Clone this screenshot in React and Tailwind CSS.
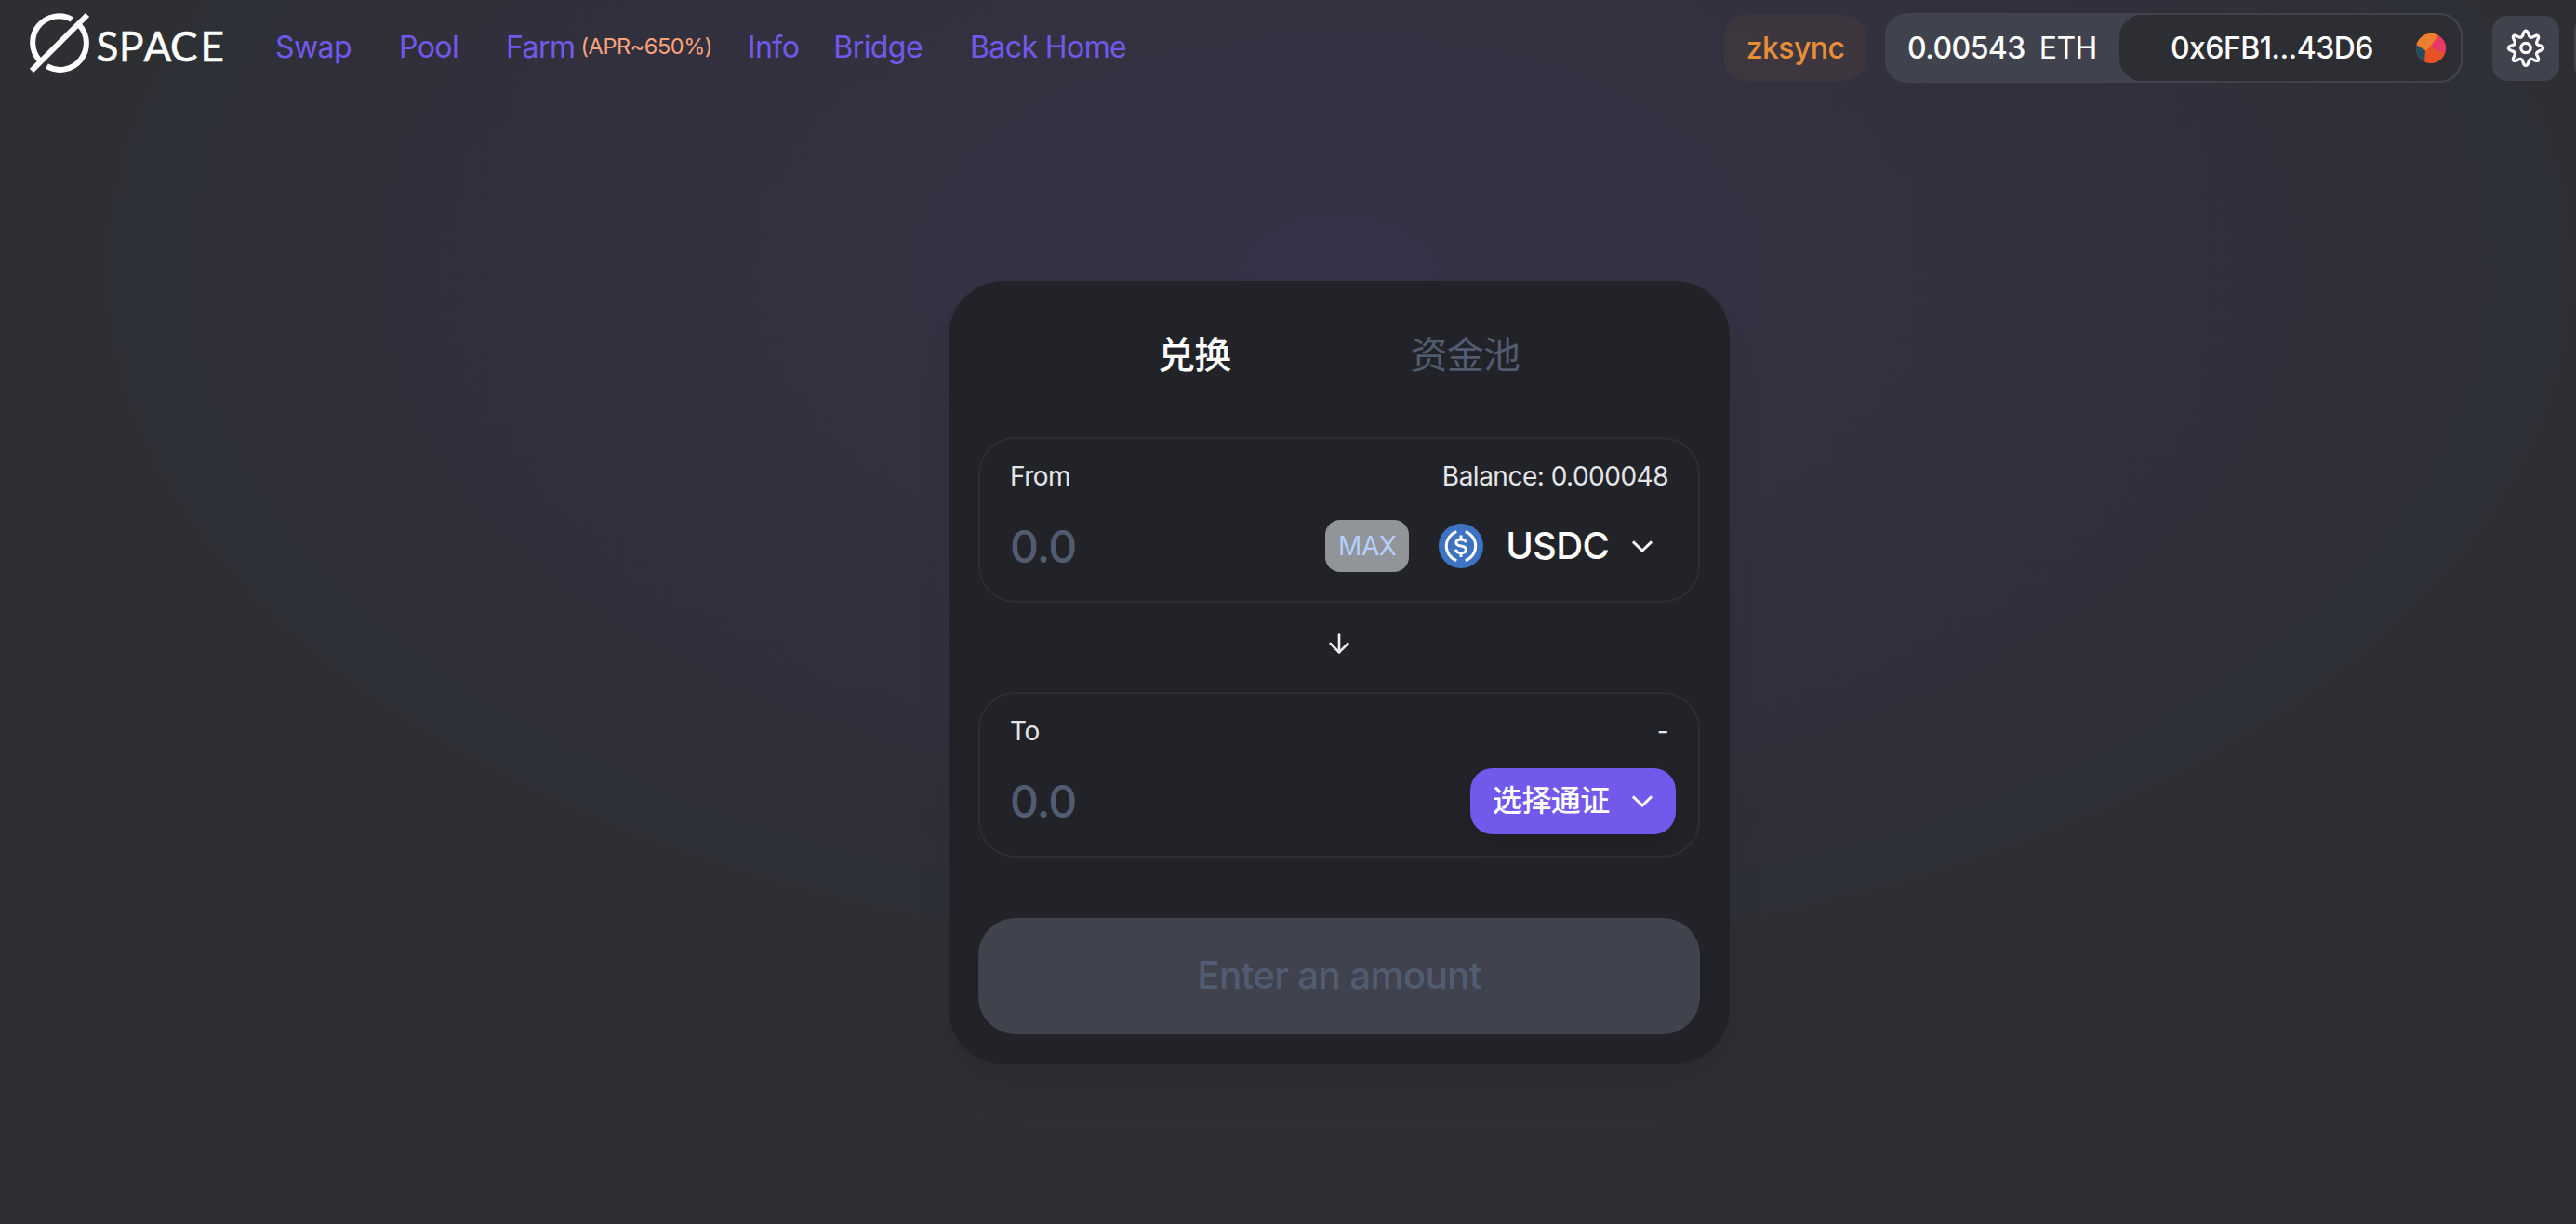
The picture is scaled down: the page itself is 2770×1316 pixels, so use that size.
import { useState } from "react";
import { ArrowDown } from "lucide-react";

const links = [
  { label: "Swap", className: "ml-[54px]" },
  { label: "Pool", className: "ml-[51px]" },
  { label: "Farm", note: "(APR~650%)", className: "ml-[51px]" },
  { label: "Info", className: "ml-[38px]" },
  { label: "Bridge", className: "ml-[37px]" },
  { label: "Back Home", className: "ml-[51px]" },
];

function Logo() {
  return (
    <svg className="h-[104px] w-[210px] shrink-0" viewBox="32 0 210 104" fill="none">
      <g stroke="#fff" strokeWidth="6">
        <path d="M77.3 20.8A28.5 28.5 0 0 0 42.2 64.6" />
        <path d="M85.3 27A28.5 28.5 0 0 1 50.4 71.2" />
        <path d="M34 76L94 16" />
      </g>
      <text x="103.5 128 154.5 183 215.5" y="66" fill="#fff" fontFamily="Lato" fontSize="44" stroke="#fff" strokeWidth="0.6">
        SPACE
      </text>
    </svg>
  );
}

function Chevron() {
  return (
    <svg className="h-[14px] w-6" viewBox="0 0 12 7" fill="none">
      <path d="M0.97 1.19L6 6.06L11.03 1.19" stroke="#fff" strokeWidth="1.4" />
    </svg>
  );
}

function UsdcIcon() {
  return (
    <svg className="size-12" viewBox="0 0 48 48" fill="none">
      <circle cx="24" cy="24" r="24" fill="#3e73c4" />
      <g stroke="#fff" strokeWidth="3">
        <path d="M19.3 8.6A16.4 16.4 0 0 0 19.3 39.6" />
        <path d="M28.7 8.6A16.4 16.4 0 0 1 28.7 39.6" />
        <path d="M24 12.5V17M24 31.5V36" />
        <path d="M29.3 20.2C29 17.8 27 16.9 24 16.9C21 16.9 18.9 18.2 18.9 20.5C18.9 22.9 21 23.6 24 24.1C27.2 24.6 29.3 25.5 29.3 27.9C29.3 30.3 27 31.6 24 31.6C20.8 31.6 18.7 30.3 18.4 27.7" />
      </g>
    </svg>
  );
}

function Avatar() {
  return (
    <svg className="size-8 shrink-0" viewBox="0 0 32 32">
      <clipPath id="avatar">
        <circle cx="16" cy="16" r="16" />
      </clipPath>
      <g clipPath="url(#avatar)">
        <path d="M0 0H32V32H0Z" fill="#e75325" />
        <path d="M0 12L10 18L9 32H0Z" fill="#22505c" />
        <path d="M0 11.5L10.5 18.5L15 14.5L26 0H0Z" fill="#eb7f2f" />
        <path d="M15 14.5L32 21.5V0H26Z" fill="#ea3769" />
      </g>
    </svg>
  );
}

function GearIcon() {
  return (
    <svg className="size-11" viewBox="0 0 44 44" fill="none" stroke="#fff" strokeWidth="3.3">
      <circle cx="22" cy="21.5" r="5.2" />
      <path
        strokeLinejoin="round"
        d="M22 3.2C25.2 3.2 24.4 9.1 27 10.1C29.7 11.2 33 6.5 35.2 8.6C37.3 10.8 32.6 14.1 33.7 16.8C34.7 19.4 40.6 18.6 40.6 21.8C40.6 25 34.7 24.2 33.7 26.8C32.6 29.5 37.3 32.8 35.2 35C33 37.1 29.7 32.4 27 33.5C24.4 34.5 25.2 40.4 22 40.4C18.8 40.4 19.6 34.5 17 33.5C14.3 32.4 11 37.1 8.8 35C6.7 32.8 11.4 29.5 10.3 26.8C9.3 24.2 3.4 25 3.4 21.8C3.4 18.6 9.3 19.4 10.3 16.8C11.4 14.1 6.7 10.8 8.8 8.6C11 6.5 14.3 11.2 17 10.1C19.6 9.1 18.8 3.2 22 3.2Z"
      />
    </svg>
  );
}

function Header() {
  return (
    <header className="flex h-[103px] items-center justify-between pl-8">
      <div className="flex items-center">
        <Logo />
        <nav className="flex items-center text-[32px] leading-[38px] text-[#7259eb]">
          {links.map((link) => (
            <a key={link.label} href="#" className={`mb-[1px] flex items-center whitespace-nowrap ${link.className}`}>
              {link.label}
              {link.note && <span className="mb-0.5 ml-1.5 text-[23.5px] text-[#f8a37c]">{link.note}</span>}
            </a>
          ))}
        </nav>
      </div>

      <div className="flex items-center text-[32px] font-medium text-white">
        <div className="flex h-[71px] w-[153px] items-center justify-center rounded-3xl bg-[#f28b30]/6 text-[#e68d39]">
          zksync
        </div>
        <div className="ml-5 flex h-[75px] w-[621px] items-center justify-between rounded-3xl bg-[#40424d] p-0.5">
          <div className="flex pl-[22px]">
            <span>0.00543</span>
            <span className="ml-[15px] font-normal">ETH</span>
          </div>
          <button className="flex h-[71px] w-[367px] items-center justify-between rounded-3xl bg-[#2d2e33] pr-4 pl-[55px]">
            0x6FB1...43D6
            <Avatar />
          </button>
        </div>
        <button className="ml-8 flex h-[70px] w-18 items-center justify-center rounded-2xl bg-[#40424d]">
          <GearIcon />
        </button>
        <button className="ml-4 h-[70px] w-18 rounded-2xl bg-[#40424d]" />
        <div className="w-10" />
      </div>
    </header>
  );
}

function CurrencyPanel({ label, balance, value, onChange, children }) {
  return (
    <div className="h-[178px] rounded-[40px] border-2 border-[#2d2e33]">
      <div className="flex justify-between px-8 pt-[23px] text-[28px] leading-[34px] text-[#e4e5e8]">
        <span>{label}</span>
        <span>{balance}</span>
      </div>
      <div className="mt-[9px] flex h-[98px] items-center pr-6 pl-8">
        <input
          className="w-0 flex-1 bg-transparent text-5xl font-medium text-white outline-none placeholder:text-[#525c71]"
          placeholder="0.0"
          value={value}
          onChange={(e) => onChange(e.target.value)}
        />
        {children}
      </div>
    </div>
  );
}

export default function App() {
  const [from, setFrom] = useState("");
  const [to, setTo] = useState("");

  return (
    <div className="h-[1316px] w-full overflow-hidden bg-[#2e2f33] font-[Inter,'Noto_Sans_CJK_SC',sans-serif] [&_*]:tracking-[-0.018em]">
      <div className="h-full w-[2880px] bg-[radial-gradient(1325px_740px_at_1440px_290px,#363248,#343241_35%,#32303e_65%,#302f39_86%,#2e3038_94%,#2d3036_99%,#2e2f33_101%)]">
        <Header />

        <main className="mx-auto mt-[199px] h-[842px] w-[840px] rounded-[60px] bg-[#222328] px-8 shadow-[0_0_2px_rgba(0,0,0,0.01),0_8px_16px_rgba(0,0,0,0.04),0_32px_48px_rgba(0,0,0,0.04)]">
          <div className="flex h-[168px] items-center pb-2 text-[40px]">
            <button className="ml-[193px] font-medium text-white">兑换</button>
            <button className="ml-[193px] text-[#525c71]">资金池</button>
          </div>

          <CurrencyPanel label="From" balance="Balance: 0.000048" value={from} onChange={setFrom}>
            <button className="mr-8 h-14 w-[90px] rounded-2xl bg-[#919499] text-[28px] text-[#b5d1fb]">MAX</button>
            <button className="flex items-center pr-6 text-[40px] font-medium text-white">
              <UsdcIcon />
              <span className="mr-[24px] ml-[24px]">USDC</span>
              <Chevron />
            </button>
          </CurrencyPanel>

          <div className="flex h-24 items-center justify-center pb-2">
            <ArrowDown className="size-8 text-[#eceef2]" />
          </div>

          <CurrencyPanel label="To" balance="-" value={to} onChange={setTo}>
            <button className="flex h-[71px] w-[221px] items-center justify-between rounded-3xl bg-[#7259eb] pr-6 pl-6 text-[32px] font-medium text-white shadow-[0_12px_20px_rgba(0,0,0,0.08)]">
              选择通证
              <Chevron />
            </button>
          </CurrencyPanel>

          <button className="mt-[65px] h-[125px] w-full rounded-[40px] bg-[#40424d] text-[40.5px] font-medium text-[#525c71]">
            Enter an amount
          </button>
        </main>
      </div>
    </div>
  );
}
